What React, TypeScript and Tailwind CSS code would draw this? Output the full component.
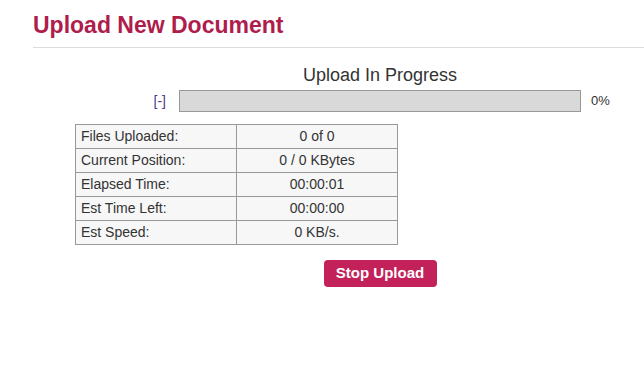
const stats: [string, string][] = [
  ["Files Uploaded:", "0 of 0"],
  ["Current Position:", "0 / 0 KBytes"],
  ["Elapsed Time:", "00:00:01"],
  ["Est Time Left:", "00:00:00"],
  ["Est Speed:", "0 KB/s."],
];

export default function App() {
  return (
    <div className="h-[388px] w-full overflow-hidden bg-white font-['Liberation_Sans',Arial,sans-serif] text-[#333]">
      <div className="ml-[33px] w-[694px]">
        <h1 className="border-b border-[#dcdcdc] pt-[12px] pb-[8px] text-[23px] leading-[27px] font-bold text-[#ae1d4c]">
          Upload New Document
        </h1>

        <div className="mt-[17px] text-center text-[18px] leading-[21px]">Upload In Progress</div>

        <div className="mt-[4px] grid grid-cols-[1fr_402px_1fr] items-center text-[13px]">
          <span className="mr-[13px] justify-self-end text-[14px] text-[#51398a]">[-]</span>
          <div className="h-[22px] border border-[#999] bg-[#d9d9d9]" />
          <span className="ml-[10px]">0%</span>
        </div>

        <div className="mt-[12px] ml-[42px] grid w-[323px] grid-cols-[161px_161px] border-t border-l border-[#999] bg-[#f7f7f7] text-[14px]">
          {stats.map(([k, v]) => (
            <div key={k} className="contents">
              <div className="flex h-[24px] items-center border-r border-b border-[#999] pl-[5px]">{k}</div>
              <div className="flex h-[24px] items-center justify-center border-r border-b border-[#999]">{v}</div>
            </div>
          ))}
        </div>

        <div className="mt-[15px] flex justify-center">
          <button className="h-[27px] w-[113px] rounded-[4px] bg-[#c3215a] text-[15px] font-bold text-white">
            Stop Upload
          </button>
        </div>
      </div>
    </div>
  );
}
